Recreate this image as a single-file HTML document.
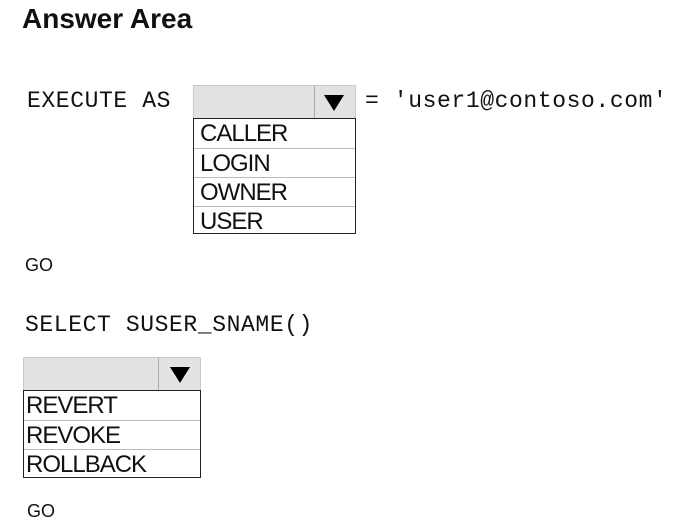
<!DOCTYPE html>
<html><head><style>
body{margin:0;width:676px;height:532px;background:#fff;position:relative;overflow:hidden;font-family:"Liberation Sans",sans-serif;color:#111}
.a{position:absolute}
.mono{font-family:"Liberation Mono",monospace;font-size:23px;letter-spacing:0.6px}
.dd{position:absolute;background:#e2e2e2;border:1px solid #c8c8c8;box-sizing:border-box}
.dd .div{position:absolute;top:0;bottom:0;width:1px;background:#aaa}
.tri{position:absolute;width:0;height:0;border-left:10px solid transparent;border-right:10px solid transparent;border-top:16px solid #000}
.list{position:absolute;border:1.5px solid #222;box-sizing:border-box;background:#fff}
.list div{height:29px;line-height:29px;font-size:24px;padding-left:6px;border-top:1px solid #bbb;box-sizing:border-box;letter-spacing:-1px}
.list div:first-child{border-top:none}
</style></head><body>
<div class="a" style="left:22px;top:3px;font-size:28px;font-weight:bold">Answer Area</div>
<div class="a mono" style="left:27px;top:88px">EXECUTE AS</div>
<div class="dd" style="left:193px;top:85px;width:163px;height:34px"><div class="div" style="left:120px"></div><div class="tri" style="left:130px;top:9px"></div></div>
<div class="a mono" style="left:365px;top:88px">= 'user1@contoso.com'</div>
<div class="list" style="left:193px;top:118px;width:163px;height:116px">
<div>CALLER</div><div>LOGIN</div><div>OWNER</div><div>USER</div></div>
<div class="a" style="left:25px;top:255px;font-size:18px">GO</div>
<div class="a mono" style="left:25px;top:312px">SELECT SUSER_SNAME()</div>
<div class="dd" style="left:23px;top:357px;width:178px;height:34px"><div class="div" style="left:134px"></div><div class="tri" style="left:146px;top:9px"></div></div>
<div class="list" style="left:23px;top:390px;width:178px;height:88px">
<div style="padding-left:2px">REVERT</div><div style="padding-left:2px">REVOKE</div><div style="padding-left:2px">ROLLBACK</div></div>
<div class="a" style="left:27px;top:501px;font-size:18px">GO</div>
</body></html>
